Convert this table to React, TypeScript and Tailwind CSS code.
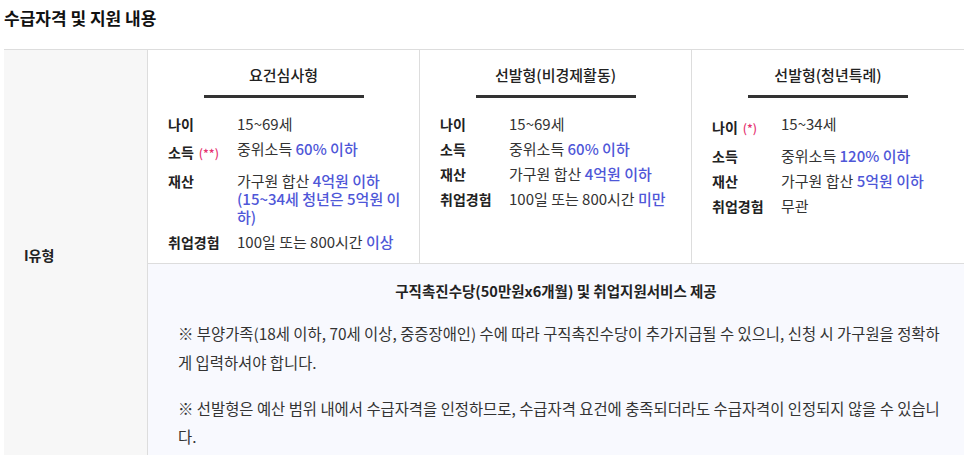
import React from "react";

type Row = { label: string; star?: string; value: React.ReactNode };

const Blue = ({ children }: { children: React.ReactNode }) => (
  <span className="text-[#4f57d8] font-medium">{children}</span>
);

const columns: { title: string; rows: Row[] }[] = [
  {
    title: "요건심사형",
    rows: [
      { label: "나이", value: "15~69세" },
      {
        label: "소득",
        star: "(**)",
        value: (
          <>
            중위소득 <Blue>60% 이하</Blue>
          </>
        ),
      },
      {
        label: "재산",
        value: (
          <>
            가구원 합산{" "}
            <Blue>
              4억원 이하
              <br />
              (15~34세 청년은 5억원 이하)
            </Blue>
          </>
        ),
      },
      {
        label: "취업경험",
        value: (
          <>
            100일 또는 800시간 <Blue>이상</Blue>
          </>
        ),
      },
    ],
  },
  {
    title: "선발형(비경제활동)",
    rows: [
      { label: "나이", value: "15~69세" },
      {
        label: "소득",
        value: (
          <>
            중위소득 <Blue>60% 이하</Blue>
          </>
        ),
      },
      {
        label: "재산",
        value: (
          <>
            가구원 합산 <Blue>4억원 이하</Blue>
          </>
        ),
      },
      {
        label: "취업경험",
        value: (
          <>
            100일 또는 800시간 <Blue>미만</Blue>
          </>
        ),
      },
    ],
  },
  {
    title: "선발형(청년특례)",
    rows: [
      { label: "나이", star: "(*)", value: "15~34세" },
      {
        label: "소득",
        value: (
          <>
            중위소득 <Blue>120% 이하</Blue>
          </>
        ),
      },
      {
        label: "재산",
        value: (
          <>
            가구원 합산 <Blue>5억원 이하</Blue>
          </>
        ),
      },
      { label: "취업경험", value: "무관" },
    ],
  },
];

const TypeColumn = ({ title, rows, last }: { title: string; rows: Row[]; last?: boolean }) => (
  <div className={`pt-[14px] pb-[12px] ${last ? "" : "border-r border-[#dddddd]"}`}>
    <h3 className="text-center text-[15px] leading-[22px] font-medium text-[#222]">{title}</h3>
    <div className="mx-auto mt-[9px] h-[3px] w-[160px] bg-[#333333]" />
    <div className="mt-[17px] flex flex-col gap-[7px] pl-[20px] pr-[14px]">
      {rows.map((row) => (
        <div key={row.label} className="flex items-start leading-[18px]">
          <div
            className={`w-[69px] shrink-0 text-[14px] font-bold text-[#222] ${row.star ? "py-[3px]" : ""}`}
          >
            {row.label}
            {row.star && (
              <span className="ml-[5px] text-[12px] font-medium text-[#e5306f]">{row.star}</span>
            )}
          </div>
          <div className="flex-1 text-[15px] text-[#333]">{row.value}</div>
        </div>
      ))}
    </div>
  </div>
);

export default function App() {
  return (
    <div
      className="min-h-screen bg-white px-[4px] pt-[6px] text-[#333]"
      style={{ fontFamily: '"Noto Sans CJK KR", "Noto Sans", sans-serif' }}
    >
      <h2 className="text-[17px] leading-[24px] font-bold text-[#111]">수급자격 및 지원 내용</h2>

      <div className="mt-[19px] flex w-[960px] border-t border-[#dddddd]">
        <div className="flex w-[144px] shrink-0 items-center border-r border-[#dddddd] bg-[#f7f7f7] pl-[20px]">
          <span className="text-[14px] font-bold text-[#222]">I유형</span>
        </div>

        <div className="flex-1">
          <div className="grid grid-cols-3 border-b border-[#dddddd]">
            {columns.map((col, i) => (
              <TypeColumn key={col.title} title={col.title} rows={col.rows} last={i === 2} />
            ))}
          </div>

          <div className="bg-[#f8f9fe] pt-[18px] pb-[11px] pl-[30px] pr-[14px]">
            <p className="pr-[16px] text-center text-[14.5px] leading-[18px] font-bold text-[#222]">
              구직촉진수당(50만원x6개월) 및 취업지원서비스 제공
            </p>
            <p className="mt-[19px] text-[15.4px] leading-[29px] text-[#333]">
              ※ 부양가족(18세 이하, 70세 이상, 중증장애인) 수에 따라 구직촉진수당이 추가지급될 수
              있으니, 신청 시 가구원을 정확하게 입력하셔야 합니다.
            </p>
            <p className="mt-[17px] text-[15.4px] leading-[28px] text-[#333]">
              ※ 선발형은 예산 범위 내에서 수급자격을 인정하므로, 수급자격 요건에 충족되더라도
              수급자격이 인정되지 않을 수 있습니다.
            </p>
          </div>
        </div>
      </div>
    </div>
  );
}
